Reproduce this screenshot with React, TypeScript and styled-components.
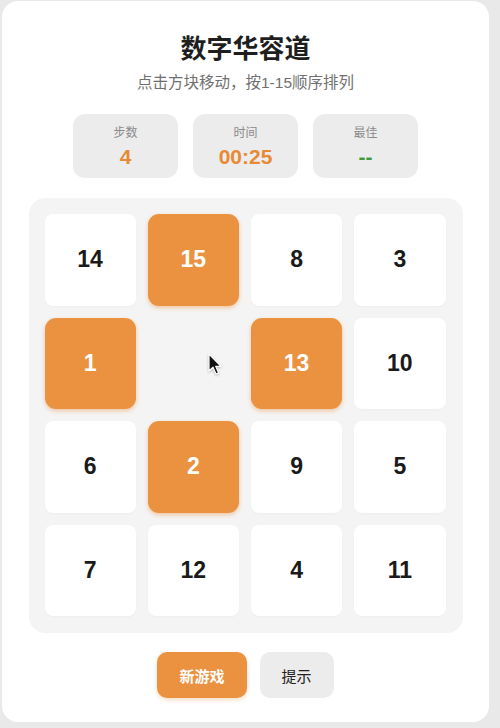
import React, { useState } from "react";
import styled, { createGlobalStyle } from "styled-components";

const GlobalStyle = createGlobalStyle`
	html, body {
		margin: 0;
		padding: 0;
		background: #e9e9e9;
	}
	body {
		font-family: "Liberation Sans", "Noto Sans CJK SC", sans-serif;
	}
`;

// 0 = 空格
const initialBoard = [14, 15, 8, 3, 1, 0, 13, 10, 6, 2, 9, 5, 7, 12, 4, 11];
const movable = [15, 1, 13, 2];

export default function App() {
	const [board] = useState(initialBoard);
	const [steps] = useState(4);

	return (
		<Page>
			<GlobalStyle />
			<Card>
				<Title>数字华容道</Title>
				<Subtitle>点击方块移动，按1-15顺序排列</Subtitle>
				<StatRow>
					<StatBox>
						<StatLabel>步数</StatLabel>
						<StatValue>{steps}</StatValue>
					</StatBox>
					<StatBox>
						<StatLabel>时间</StatLabel>
						<StatValue>00:25</StatValue>
					</StatBox>
					<StatBox>
						<StatLabel>最佳</StatLabel>
						<StatValue $best>--</StatValue>
					</StatBox>
				</StatRow>
				<Board>
					{board.map((n, i) =>
						n === 0 ? (
							<EmptyCell key={i}>
								<Cursor width="14" height="23" viewBox="0 0 14 23">
									<path
										d="M1 1 L1 18 L5 14.2 L8 21 L10.6 19.9 L7.7 13.3 L13 13.3 Z"
										fill="#111"
										stroke="#fff"
										strokeWidth="1.2"
										strokeLinejoin="round"
									/>
								</Cursor>
							</EmptyCell>
						) : (
							<Tile key={i} $active={movable.includes(n)}>
								{n}
							</Tile>
						),
					)}
				</Board>
				<ButtonRow>
					<Button $primary>新游戏</Button>
					<Button>提示</Button>
				</ButtonRow>
			</Card>
		</Page>
	);
}

const Page = styled.div`
	padding: 1px 11px 0 2px;
	height: 728px;
	box-sizing: border-box;
`;

const Card = styled.div`
	height: 721px;
	box-sizing: border-box;
	background: #fff;
	border-radius: 16px;
	padding-top: 30px;
	display: flex;
	flex-direction: column;
	align-items: center;
`;

const Title = styled.h1`
	margin: 0;
	font-size: 26px;
	line-height: 36px;
	font-weight: 600;
	color: #1e1e1e;
`;

const Subtitle = styled.p`
	margin: 6px 0 0;
	font-size: 15.5px;
	line-height: 20px;
	color: #707070;
`;

const StatRow = styled.div`
	margin-top: 21px;
	display: flex;
	gap: 15px;
`;

const StatBox = styled.div`
	width: 105px;
	height: 64px;
	box-sizing: border-box;
	padding-top: 11px;
	background: #ececec;
	border-radius: 12px;
	display: flex;
	flex-direction: column;
	align-items: center;
`;

const StatLabel = styled.span`
	font-size: 12px;
	line-height: 16px;
	color: #8a8a8a;
`;

const StatValue = styled.span<{ $best?: boolean }>`
	margin-top: 3px;
	font-size: 21px;
	line-height: 26px;
	font-weight: 700;
	color: ${(p) => (p.$best ? "#3f9a3a" : "#e88a34")};
`;

const Board = styled.div`
	margin-top: 20px;
	width: 434px;
	height: 435px;
	box-sizing: border-box;
	padding: 16px 17px 17px 16px;
	background: #f4f4f4;
	border-radius: 16px;
	display: grid;
	grid-template-columns: repeat(4, 1fr);
	grid-template-rows: repeat(4, 1fr);
	gap: 12px;
`;

const Tile = styled.div<{ $active?: boolean }>`
	display: flex;
	align-items: center;
	justify-content: center;
	border-radius: ${(p) => (p.$active ? "11px" : "8px")};
	background: ${(p) => (p.$active ? "#eb9241" : "#fff")};
	color: ${(p) => (p.$active ? "#fff" : "#1a1a1a")};
	box-shadow: ${(p) =>
		p.$active ? "0 2px 4px rgba(236, 144, 63, 0.45)" : "0 1px 2px rgba(0, 0, 0, 0.03)"};
	font-size: 23px;
	font-weight: 700;
`;

const EmptyCell = styled.div`
	position: relative;
`;

const Cursor = styled.svg`
	position: absolute;
	left: 60px;
	top: 35px;
	filter: drop-shadow(0 1px 1px rgba(0, 0, 0, 0.25));
`;

const ButtonRow = styled.div`
	margin-top: 19px;
	display: flex;
	gap: 13px;
`;

const Button = styled.button<{ $primary?: boolean }>`
	height: 46px;
	padding: 0 22px;
	border: none;
	border-radius: 10px;
	font-family: "Liberation Sans", "Noto Sans CJK SC", sans-serif;
	font-size: 15px;
	font-weight: ${(p) => (p.$primary ? 700 : 400)};
	background: ${(p) => (p.$primary ? "#eb9241" : "#ececec")};
	color: ${(p) => (p.$primary ? "#fff" : "#222")};
	box-shadow: ${(p) => (p.$primary ? "0 2px 4px rgba(236, 144, 63, 0.3)" : "none")};
`;
